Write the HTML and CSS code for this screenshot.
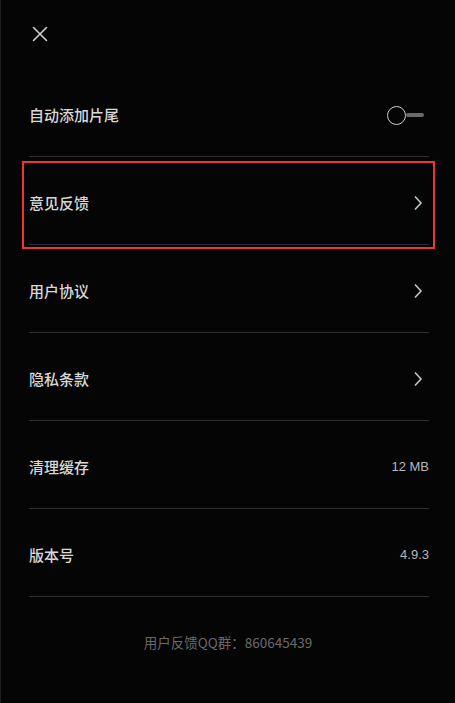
FILE: index.html
```html
<!DOCTYPE html>
<html lang="zh-CN">
<head>
<meta charset="utf-8">
<link rel="stylesheet" href="styles.css">
</head>
<body>
<div class="screen">
  <header class="top">
    <svg class="close" width="16" height="16" viewBox="0 0 16 16"><path d="M1.5 1.5 L14.5 14.5 M14.5 1.5 L1.5 14.5" stroke="#d0d0d0" stroke-width="1.6" fill="none" stroke-linecap="round"/></svg>
  </header>
  <ul class="list">
    <li class="row">
      <span class="label">自动添加片尾</span>
      <span class="toggle"><span class="knob"></span><span class="track"></span></span>
    </li>
    <li class="row highlighted">
      <span class="label">意见反馈</span>
      <svg class="chev" width="10" height="16" viewBox="0 0 10 16"><path d="M2 1.5 L8 8 L2 14.5" stroke="#c4c4c4" stroke-width="1.6" fill="none"/></svg>
    </li>
    <li class="row">
      <span class="label">用户协议</span>
      <svg class="chev" width="10" height="16" viewBox="0 0 10 16"><path d="M2 1.5 L8 8 L2 14.5" stroke="#c4c4c4" stroke-width="1.6" fill="none"/></svg>
    </li>
    <li class="row">
      <span class="label">隐私条款</span>
      <svg class="chev" width="10" height="16" viewBox="0 0 10 16"><path d="M2 1.5 L8 8 L2 14.5" stroke="#c4c4c4" stroke-width="1.6" fill="none"/></svg>
    </li>
    <li class="row">
      <span class="label">清理缓存</span>
      <span class="value">12 MB</span>
    </li>
    <li class="row">
      <span class="label">版本号</span>
      <span class="value">4.9.3</span>
    </li>
  </ul>
  <p class="footer">用户反馈QQ群：860645439</p>
</div>
</body>
</html>
```
FILE: styles.css
```css
html, body {
  margin: 0;
  padding: 0;
  background: #050505;
}
body {
  font-family: "Noto Sans CJK SC", "Noto Sans", sans-serif;
  color: #d6d6d6;
}
.screen {
  width: 455px;
  height: 703px;
  box-sizing: border-box;
  border-left: 1px solid #1e1e1e;
  background: #050505;
  overflow: hidden;
}
.top {
  height: 69px;
  display: flex;
  align-items: flex-start;
}
.close {
  margin-top: 26px;
  margin-left: 31px;
}
.list {
  list-style: none;
  margin: 0 26px 0 28px;
  padding: 0;
}
.row {
  position: relative;
  display: flex;
  align-items: center;
  justify-content: space-between;
  height: 20px;
  padding: 36px 0 31px;
  border-bottom: 1px solid #2e2e2e;
}
.label {
  font-size: 15px;
  font-weight: 500;
  line-height: 20px;
  color: #d8d8d8;
}
.value {
  font-family: "Liberation Sans", Arial, sans-serif;
  font-size: 13px;
  line-height: 20px;
  color: #b8b8b8;
}
.chev {
  margin-right: 6px;
}
.toggle {
  display: flex;
  align-items: center;
  margin-right: 5px;
}
.knob {
  width: 19px;
  height: 19px;
  border: 1.5px solid #cfcfcf;
  border-radius: 50%;
  box-sizing: border-box;
}
.track {
  width: 18px;
  height: 4px;
  background: #6a6a6a;
  border-radius: 2px;
}
.highlighted::after {
  content: "";
  position: absolute;
  top: 4px;
  bottom: -5px;
  left: -7px;
  right: -6px;
  border: 2px solid #ee3434;
  pointer-events: none;
}
.footer {
  margin: 36px 0 0;
  text-align: center;
  font-size: 13.5px;
  line-height: 18px;
  color: #6a6a6a;
}
```
